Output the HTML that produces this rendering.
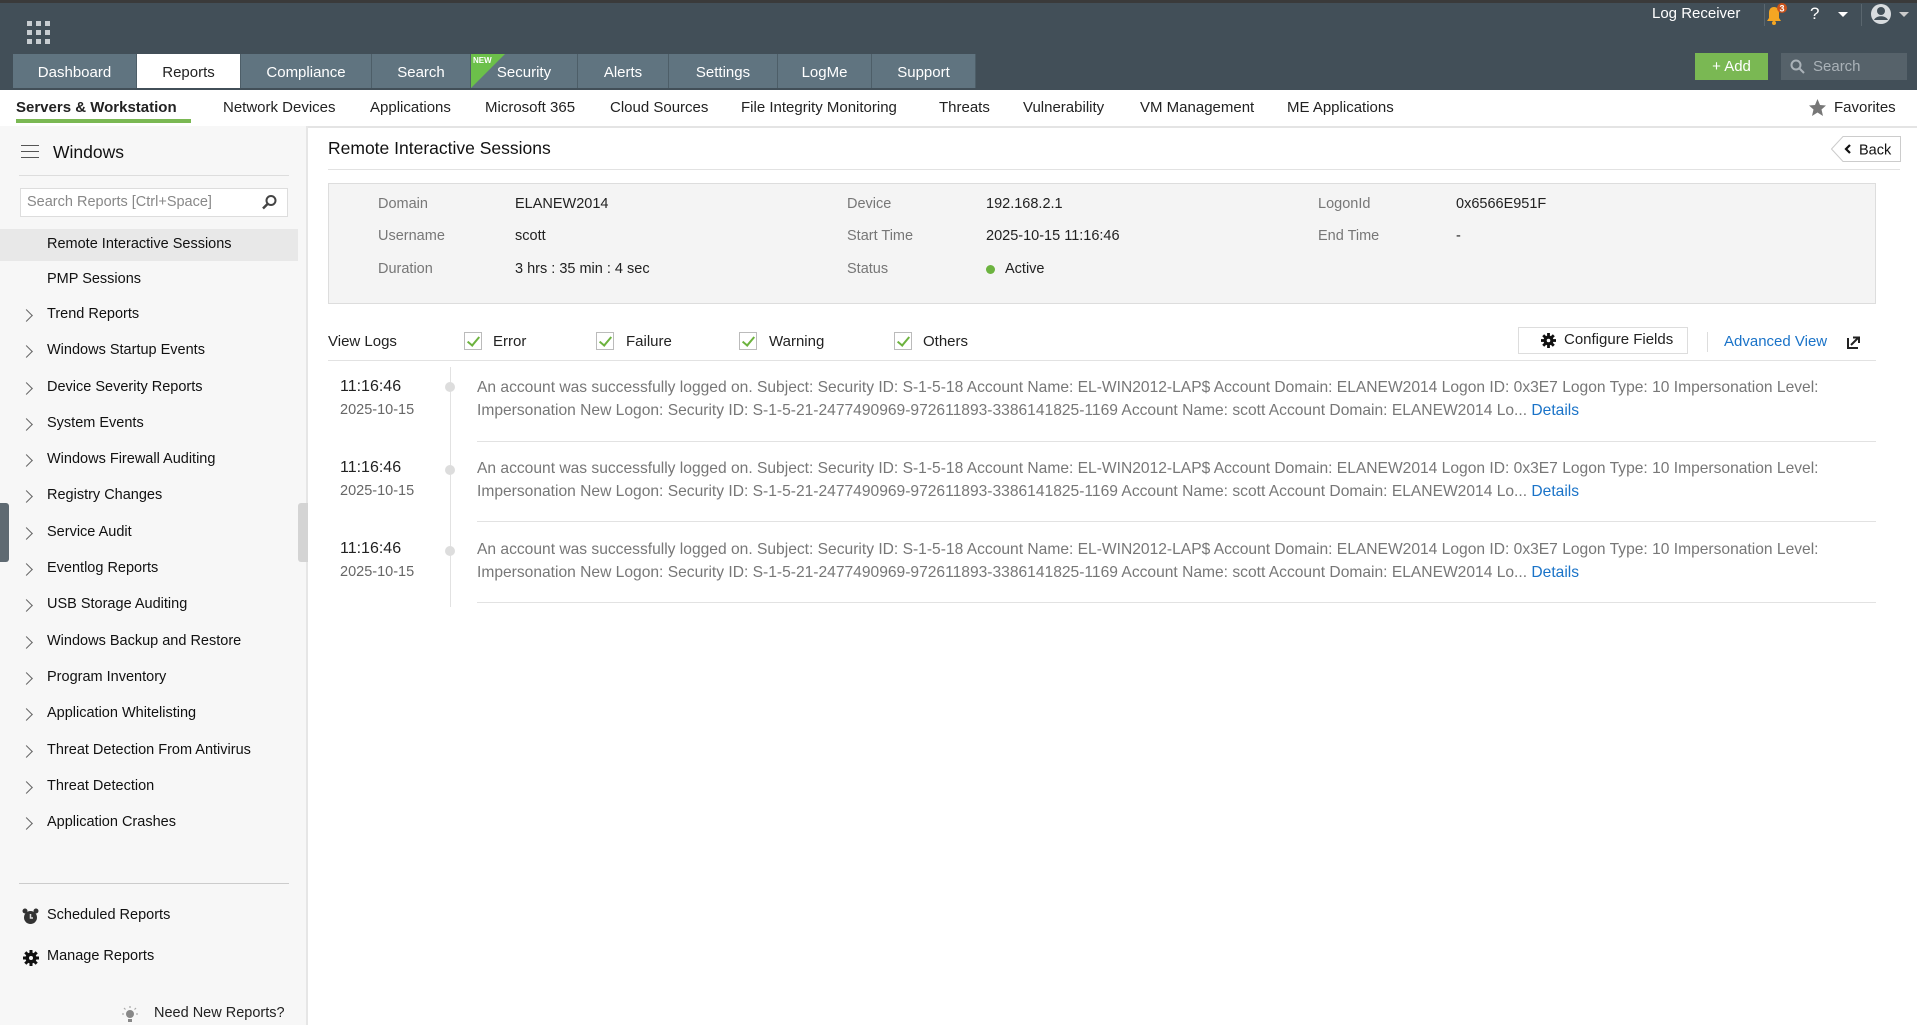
<!DOCTYPE html>
<html><head><meta charset="utf-8"><style>
*{margin:0;padding:0;box-sizing:border-box}
body{width:1917px;height:1023px;position:relative;overflow:hidden;background:#fff;font-family:"Liberation Sans",Verdana,sans-serif;color:#222}
#w{position:absolute;left:0;top:2px;width:1917px;height:1023px}
.a{position:absolute;white-space:nowrap}
#hdr{left:0;top:-2px;width:1917px;height:90px;background:#424f58;border-top:3px solid #3a3a3a}
.tab{position:absolute;top:52px;height:34px;padding-top:2px;background:#607480;color:#fff;font-size:15px;text-align:center;line-height:34px;border-right:1px solid #4d5e68}
#sub{left:0;top:86px;width:1917px;height:40px;border-bottom:2px solid #e4e4e4}
.sn{position:absolute;top:97px;font-size:15px;color:#222}
#side{left:0;top:124px;width:308px;height:899px;background:#f7f7f7;border-right:2px solid #e6e6e6}
.si{position:absolute;left:47px;font-size:14.5px;color:#111}
.chev{position:absolute;left:22px;width:9px;height:9px;border-right:1.5px solid #666;border-top:1.5px solid #666;transform:rotate(45deg)}
.lbl{position:absolute;font-size:14.5px;color:#777}
.val{position:absolute;font-size:14.5px;color:#222}
.cb{position:absolute;width:18px;height:18px;border:1px solid #bbb;background:#fff}
.cb:after{content:"";position:absolute;left:5px;top:1px;width:5px;height:10px;border-right:2px solid #6db33f;border-bottom:2px solid #6db33f;transform:rotate(40deg)}
.log{position:absolute;left:477px;font-size:15.6px;color:#777;line-height:23px;white-space:nowrap}
.log a{color:#1a73c8;text-decoration:none}
.tm{position:absolute;left:340px;font-size:16px;color:#222}
.dt{position:absolute;left:340px;font-size:14.5px;color:#666}
.hr{position:absolute;height:1px;background:#e2e2e2}
</style></head><body><div id="w">
<div class="a" id="hdr"></div>
<svg class="a" style="left:27px;top:19px" width="23" height="23"><g fill="#c8cdd1"><rect x="0" y="0" width="5" height="5"/><rect x="9" y="0" width="5" height="5"/><rect x="18" y="0" width="5" height="5"/><rect x="0" y="9" width="5" height="5"/><rect x="9" y="9" width="5" height="5"/><rect x="18" y="9" width="5" height="5"/><rect x="0" y="18" width="5" height="5"/><rect x="9" y="18" width="5" height="5"/><rect x="18" y="18" width="5" height="5"/></g></svg>
<div class="tab" style="left:13px;width:124px">Dashboard</div>
<div class="tab" style="left:137px;width:104px;background:#fff;color:#222">Reports</div>
<div class="tab" style="left:241px;width:131px">Compliance</div>
<div class="tab" style="left:372px;width:99px">Search</div>
<div class="tab" style="left:471px;width:107px">Security</div>
<svg class="a" style="left:471px;top:52px" width="34" height="34"><polygon points="0,0 34,0 0,34" fill="#6cc04a"/><text x="2" y="9" font-size="8" font-weight="bold" fill="#fff" font-family="Liberation Sans">NEW</text></svg>
<div class="tab" style="left:578px;width:91px">Alerts</div>
<div class="tab" style="left:669px;width:109px">Settings</div>
<div class="tab" style="left:778px;width:94px">LogMe</div>
<div class="tab" style="left:872px;width:104px">Support</div>
<div class="a" style="left:1652px;top:3px;color:#fff;font-size:15px">Log Receiver</div>
<div class="a" style="left:1764px;top:2px;width:1px;height:22px;background:#5a666e"></div>
<svg class="a" style="left:1762px;top:0px" width="26" height="26"><path d="M5 19 L7 16 L7 11 C7 7 9 5 12 5 C15 5 17 7 17 11 L17 16 L19 19 Z" fill="#f5a623"/><circle cx="12" cy="21" r="2" fill="#f5a623"/><circle cx="20" cy="6" r="5" fill="#c9521a"/><text x="17.5" y="9.5" font-size="9" fill="#fff" font-weight="bold" font-family="Liberation Sans">3</text></svg>
<div class="a" style="left:1810px;top:2px;color:#fff;font-size:17px">?</div>
<div class="a" style="left:1838px;top:10px;border:5px solid transparent;border-top:5px solid #fff"></div>
<div class="a" style="left:1861px;top:2px;width:1px;height:22px;background:#5a666e"></div>
<svg class="a" style="left:1870px;top:0px" width="24" height="24"><circle cx="11" cy="12" r="10" fill="#d8dcdf"/><circle cx="11" cy="9" r="4" fill="#424f58"/><path d="M4 18 C6 13 16 13 18 18" fill="#424f58"/></svg>
<div class="a" style="left:1899px;top:10px;border:5px solid transparent;border-top:5px solid #ccc"></div>
<div class="a" style="left:1695px;top:51px;width:73px;height:27px;background:#7ab853;color:#fff;font-size:15px;line-height:27px;text-align:center">+ Add</div>
<div class="a" style="left:1781px;top:51px;width:126px;height:27px;background:#56626a;color:#aab2b8;font-size:15px;line-height:27px;padding-left:32px">Search</div>
<svg class="a" style="left:1790px;top:57px" width="16" height="16"><circle cx="6" cy="6" r="4.5" fill="none" stroke="#aab2b8" stroke-width="2"/><line x1="9.5" y1="9.5" x2="14" y2="14" stroke="#aab2b8" stroke-width="2"/></svg>

<div class="a" id="sub"></div>
<div class="sn" style="left:16px;font-weight:bold">Servers &amp; Workstation</div>
<div class="a" style="left:16px;top:117px;width:175px;height:4px;background:#7ab853"></div>
<div class="sn" style="left:223px">Network Devices</div>
<div class="sn" style="left:370px">Applications</div>
<div class="sn" style="left:485px">Microsoft 365</div>
<div class="sn" style="left:610px">Cloud Sources</div>
<div class="sn" style="left:741px">File Integrity Monitoring</div>
<div class="sn" style="left:939px">Threats</div>
<div class="sn" style="left:1023px">Vulnerability</div>
<div class="sn" style="left:1140px">VM Management</div>
<div class="sn" style="left:1287px">ME Applications</div>
<svg class="a" style="left:1809px;top:97px" width="17" height="17"><polygon points="8.5,0 11,6 17,6.5 12.5,10.5 14,17 8.5,13.5 3,17 4.5,10.5 0,6.5 6,6" fill="#777"/></svg>
<div class="sn" style="left:1834px">Favorites</div>

<div class="a" id="side"></div>
<div class="a" style="left:21px;top:143px;width:18px;height:1px;background:#555;box-shadow:0 6px 0 #555,0 12px 0 #555"></div>
<div class="a" style="left:53px;top:140px;font-size:17.5px;color:#111">Windows</div>
<div class="a" style="left:19px;top:173px;width:270px;height:1px;background:#ddd"></div>
<div class="a" style="left:20px;top:186px;width:268px;height:29px;border:1px solid #ddd;background:#fff;font-size:14.5px;color:#888;line-height:27px;padding-left:6px">Search Reports [Ctrl+Space]</div>
<svg class="a" style="left:262px;top:192px" width="16" height="16"><circle cx="9" cy="6.5" r="4.5" fill="none" stroke="#444" stroke-width="2"/><line x1="5.5" y1="10" x2="1" y2="14.5" stroke="#444" stroke-width="2.5"/></svg>
<div class="a" style="left:0;top:227px;width:298px;height:32px;background:#e8e8e8"></div>
<div class="si" style="top:234px">Remote Interactive Sessions</div>
<div class="si" style="top:269px">PMP Sessions</div>
<div class="chev" style="top:309px"></div><div class="si" style="top:304px">Trend Reports</div>
<div class="chev" style="top:345px"></div><div class="si" style="top:340px">Windows Startup Events</div>
<div class="chev" style="top:382px"></div><div class="si" style="top:377px">Device Severity Reports</div>
<div class="chev" style="top:418px"></div><div class="si" style="top:413px">System Events</div>
<div class="chev" style="top:454px"></div><div class="si" style="top:449px">Windows Firewall Auditing</div>
<div class="chev" style="top:490px"></div><div class="si" style="top:485px">Registry Changes</div>
<div class="chev" style="top:527px"></div><div class="si" style="top:522px">Service Audit</div>
<div class="chev" style="top:563px"></div><div class="si" style="top:558px">Eventlog Reports</div>
<div class="chev" style="top:599px"></div><div class="si" style="top:594px">USB Storage Auditing</div>
<div class="chev" style="top:636px"></div><div class="si" style="top:631px">Windows Backup and Restore</div>
<div class="chev" style="top:672px"></div><div class="si" style="top:667px">Program Inventory</div>
<div class="chev" style="top:708px"></div><div class="si" style="top:703px">Application Whitelisting</div>
<div class="chev" style="top:745px"></div><div class="si" style="top:740px">Threat Detection From Antivirus</div>
<div class="chev" style="top:781px"></div><div class="si" style="top:776px">Threat Detection</div>
<div class="chev" style="top:817px"></div><div class="si" style="top:812px">Application Crashes</div>
<div class="a" style="left:0;top:501px;width:9px;height:59px;background:#5f6a72;border-radius:0 3px 3px 0"></div>
<div class="a" style="left:298px;top:501px;width:10px;height:59px;background:#d4d4d4;border-radius:3px 0 0 3px"></div>
<div class="a" style="left:19px;top:881px;width:270px;height:1px;background:#ccc"></div>
<svg class="a" style="left:22px;top:906px" width="17" height="17"><circle cx="8.5" cy="9.5" r="6.5" fill="#333"/><circle cx="3" cy="3" r="2.5" fill="#333"/><circle cx="14" cy="3" r="2.5" fill="#333"/><path d="M8.5 6 V10 H11" stroke="#ddd" stroke-width="1.5" fill="none"/></svg>
<div class="si" style="top:905px">Scheduled Reports</div>
<svg class="a" style="left:23px;top:948px" width="16" height="16"><circle cx="8" cy="8" r="5.5" fill="#111"/><g stroke="#111" stroke-width="3"><line x1="8" y1="0" x2="8" y2="16"/><line x1="0" y1="8" x2="16" y2="8"/><line x1="2.3" y1="2.3" x2="13.7" y2="13.7"/><line x1="13.7" y1="2.3" x2="2.3" y2="13.7"/></g><circle cx="8" cy="8" r="2" fill="#f7f7f7"/></svg>
<div class="si" style="top:946px">Manage Reports</div>
<svg class="a" style="left:121px;top:1004px" width="18" height="18"><circle cx="9" cy="8" r="4" fill="#888"/><g stroke="#aaa" stroke-width="1.2"><line x1="9" y1="0" x2="9" y2="2"/><line x1="1" y1="8" x2="3" y2="8"/><line x1="15" y1="8" x2="17" y2="8"/><line x1="3" y1="2" x2="4.5" y2="3.5"/><line x1="15" y1="2" x2="13.5" y2="3.5"/></g><rect x="7" y="13" width="4" height="3" fill="#888"/></svg>
<div class="si" style="left:154px;top:1003px;color:#222">Need New Reports?</div>

<div class="a" style="left:328px;top:136px;font-size:17.5px;color:#111">Remote Interactive Sessions</div>
<div class="hr" style="left:328px;top:167px;width:1572px"></div>
<svg class="a" style="left:1831px;top:134px" width="70" height="26"><path d="M12 0.5 H69.5 V25.5 H12 L0.5 13 Z" fill="#fff" stroke="#ccc"/><path d="M19 9 L15 13 L19 17" stroke="#111" stroke-width="2.2" fill="none"/><text x="28" y="18.5" font-size="14.5" fill="#111" font-family="Liberation Sans">Back</text></svg>
<div class="a" style="left:328px;top:181px;width:1548px;height:121px;background:#f4f4f4;border:1px solid #ddd"></div>
<div class="lbl" style="left:378px;top:194px">Domain</div><div class="val" style="left:515px;top:194px">ELANEW2014</div>
<div class="lbl" style="left:378px;top:226px">Username</div><div class="val" style="left:515px;top:226px">scott</div>
<div class="lbl" style="left:378px;top:259px">Duration</div><div class="val" style="left:515px;top:259px">3 hrs : 35 min : 4 sec</div>
<div class="lbl" style="left:847px;top:194px">Device</div><div class="val" style="left:986px;top:194px">192.168.2.1</div>
<div class="lbl" style="left:847px;top:226px">Start Time</div><div class="val" style="left:986px;top:226px">2025-10-15 11:16:46</div>
<div class="lbl" style="left:847px;top:259px">Status</div>
<div class="a" style="left:986px;top:263px;width:9px;height:9px;border-radius:50%;background:#6cb33f"></div><div class="val" style="left:1005px;top:259px">Active</div>
<div class="lbl" style="left:1318px;top:194px">LogonId</div><div class="val" style="left:1456px;top:194px">0x6566E951F</div>
<div class="lbl" style="left:1318px;top:226px">End Time</div><div class="val" style="left:1456px;top:226px">-</div>

<div class="val" style="left:328px;top:331px;font-size:15px">View Logs</div>
<div class="cb" style="left:464px;top:330px"></div><div class="val" style="left:493px;top:331px;font-size:15px">Error</div>
<div class="cb" style="left:596px;top:330px"></div><div class="val" style="left:626px;top:331px;font-size:15px">Failure</div>
<div class="cb" style="left:739px;top:330px"></div><div class="val" style="left:769px;top:331px;font-size:15px">Warning</div>
<div class="cb" style="left:894px;top:330px"></div><div class="val" style="left:923px;top:331px;font-size:15px">Others</div>
<div class="a" style="left:1518px;top:325px;width:170px;height:27px;border:1px solid #ddd;background:#fff"></div>
<svg class="a" style="left:1541px;top:331px" width="15" height="15"><circle cx="7.5" cy="7.5" r="5" fill="#111"/><g stroke="#111" stroke-width="2.8"><line x1="7.5" y1="0" x2="7.5" y2="15"/><line x1="0" y1="7.5" x2="15" y2="7.5"/><line x1="2.2" y1="2.2" x2="12.8" y2="12.8"/><line x1="12.8" y1="2.2" x2="2.2" y2="12.8"/></g><circle cx="7.5" cy="7.5" r="1.8" fill="#fff"/></svg>
<div class="val" style="left:1564px;top:329px;font-size:15px">Configure Fields</div>
<div class="a" style="left:1707px;top:330px;width:1px;height:20px;background:#ddd"></div>
<div class="a" style="left:1724px;top:331px;font-size:15px;color:#1a73c8">Advanced View</div>
<svg class="a" style="left:1847px;top:333px" width="14" height="14"><path d="M1 3 V13 H11" stroke="#222" stroke-width="2" fill="none"/><path d="M4 10 L11 3 M6 2.5 H12 V8" stroke="#222" stroke-width="2" fill="none"/></svg>
<div class="hr" style="left:328px;top:358px;width:1548px"></div>

<div class="a" style="left:450px;top:365px;width:1px;height:240px;background:#e2e2e2"></div>

<div class="tm" style="top:376px">11:16:46</div><div class="dt" style="top:400px">2025-10-15</div>
<div class="a" style="left:445px;top:380px;width:10px;height:10px;border-radius:50%;background:#ddd"></div>
<div class="log" style="top:374px">An account was successfully logged on. Subject: Security ID: S-1-5-18 Account Name: EL-WIN2012-LAP$ Account Domain: ELANEW2014 Logon ID: 0x3E7 Logon Type: 10 Impersonation Level:<br>Impersonation New Logon: Security ID: S-1-5-21-2477490969-972611893-3386141825-1169 Account Name: scott Account Domain: ELANEW2014 Lo... <a>Details</a></div>
<div class="hr" style="left:477px;top:439px;width:1399px"></div>

<div class="tm" style="top:457px">11:16:46</div><div class="dt" style="top:481px">2025-10-15</div>
<div class="a" style="left:445px;top:463px;width:10px;height:10px;border-radius:50%;background:#ddd"></div>
<div class="log" style="top:455px">An account was successfully logged on. Subject: Security ID: S-1-5-18 Account Name: EL-WIN2012-LAP$ Account Domain: ELANEW2014 Logon ID: 0x3E7 Logon Type: 10 Impersonation Level:<br>Impersonation New Logon: Security ID: S-1-5-21-2477490969-972611893-3386141825-1169 Account Name: scott Account Domain: ELANEW2014 Lo... <a>Details</a></div>
<div class="hr" style="left:477px;top:519px;width:1399px"></div>

<div class="tm" style="top:538px">11:16:46</div><div class="dt" style="top:562px">2025-10-15</div>
<div class="a" style="left:445px;top:544px;width:10px;height:10px;border-radius:50%;background:#ddd"></div>
<div class="log" style="top:536px">An account was successfully logged on. Subject: Security ID: S-1-5-18 Account Name: EL-WIN2012-LAP$ Account Domain: ELANEW2014 Logon ID: 0x3E7 Logon Type: 10 Impersonation Level:<br>Impersonation New Logon: Security ID: S-1-5-21-2477490969-972611893-3386141825-1169 Account Name: scott Account Domain: ELANEW2014 Lo... <a>Details</a></div>
<div class="hr" style="left:477px;top:600px;width:1399px"></div>
</div></body></html>
